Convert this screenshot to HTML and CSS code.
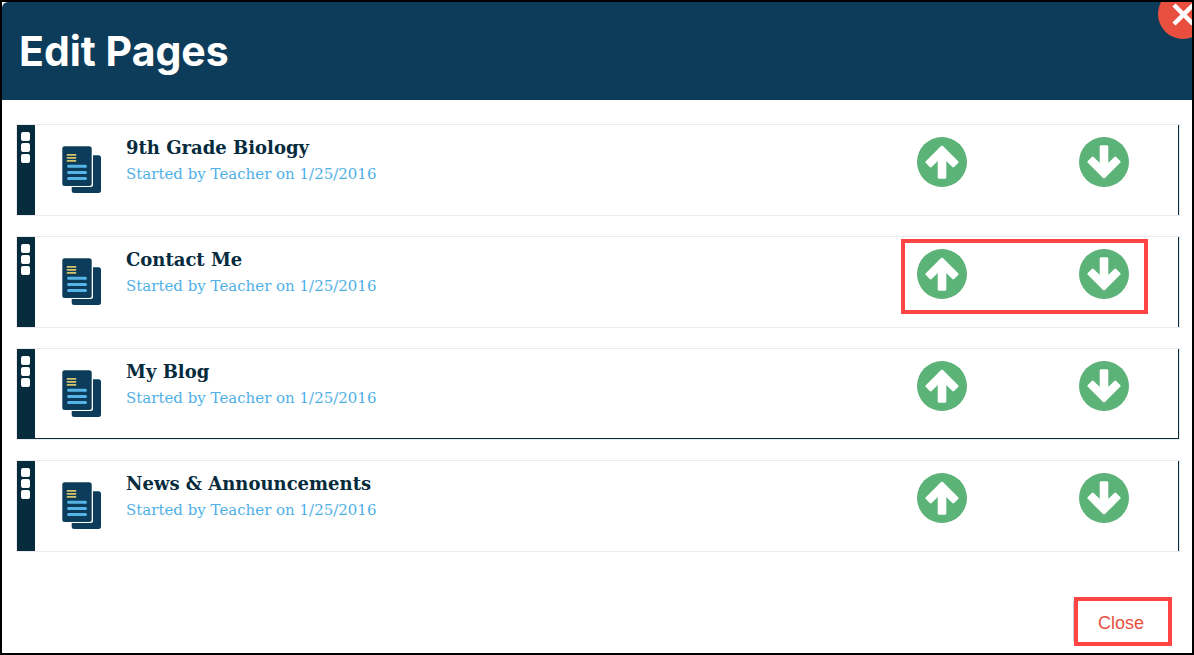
FILE: index.html
```html
<!DOCTYPE html>
<html lang="en">
<head>
  <meta charset="UTF-8" />
  <meta name="viewport" content="width=device-width, initial-scale=1.0" />
  <title>Edit Pages</title>
  <link rel="stylesheet" href="styles.css">
</head>
<body>
  <!-- Shared icons -->
  <svg class="sprite" aria-hidden="true">
    <symbol id="icon-pages" viewBox="0 0 40 48">
      <rect x="9.7" y="9.3" width="29.3" height="37.7" rx="2.5" fill="#0c3c5a"/>
      <path d="M0 0H31V38.5a2.5 2.5 0 0 1-2.5 2.5H0z" fill="#fff"/>
      <rect x="0.3" y="0.3" width="29.4" height="39.7" rx="2.5" fill="#0c3c5a"/>
      <path d="M5.5 8.8h8M5.5 11.8h8M5.5 14.8h8" stroke="#d6c46c" stroke-width="1.8" stroke-linecap="round"/>
      <path d="M6.5 20.3h17M6.5 26.4h17M6.5 32.5h17" stroke="#55b4e5" stroke-width="3" stroke-linecap="round"/>
    </symbol>
    <symbol id="icon-up" viewBox="0 0 50 50">
      <circle cx="25" cy="25" r="25" fill="#5bb377"/>
      <path d="M25 9.8L40.3 25.1L36.3 29.1L28 21V40.4H22V21L13.7 29.1L9.7 25.1Z" fill="#fff" stroke="#fff" stroke-width="2.6" stroke-linejoin="round"/>
    </symbol>
  </svg>

  <div class="modal">
    <header class="modal-header">
      <h1>Edit Pages</h1>
      <button class="dismiss" type="button" aria-label="Dismiss">
        <svg viewBox="0 0 50 50"><path d="M16 16L35 35M35 16L16 35" stroke="#fff" stroke-width="4.5"/></svg>
      </button>
    </header>

    <ul class="pages">
      <li class="page">
        <div class="page-inner">
          <div class="handle"><span></span><span></span><span></span></div>
          <svg class="page-icon"><use href="#icon-pages"/></svg>
          <div class="page-text">
            <h2>9th Grade Biology</h2>
            <p>Started by Teacher on 1/25/2016</p>
          </div>
          <div class="moves">
            <button type="button" aria-label="Move up"><svg><use href="#icon-up"/></svg></button>
            <button type="button" class="down" aria-label="Move down"><svg><use href="#icon-up"/></svg></button>
          </div>
        </div>
      </li>
      <li class="page">
        <div class="page-inner">
          <div class="handle"><span></span><span></span><span></span></div>
          <svg class="page-icon"><use href="#icon-pages"/></svg>
          <div class="page-text">
            <h2>Contact Me</h2>
            <p>Started by Teacher on 1/25/2016</p>
          </div>
          <div class="moves marked">
            <button type="button" aria-label="Move up"><svg><use href="#icon-up"/></svg></button>
            <button type="button" class="down" aria-label="Move down"><svg><use href="#icon-up"/></svg></button>
          </div>
        </div>
      </li>
      <li class="page">
        <div class="page-inner underlined">
          <div class="handle"><span></span><span></span><span></span></div>
          <svg class="page-icon"><use href="#icon-pages"/></svg>
          <div class="page-text">
            <h2>My Blog</h2>
            <p>Started by Teacher on 1/25/2016</p>
          </div>
          <div class="moves">
            <button type="button" aria-label="Move up"><svg><use href="#icon-up"/></svg></button>
            <button type="button" class="down" aria-label="Move down"><svg><use href="#icon-up"/></svg></button>
          </div>
        </div>
      </li>
      <li class="page">
        <div class="page-inner">
          <div class="handle"><span></span><span></span><span></span></div>
          <svg class="page-icon"><use href="#icon-pages"/></svg>
          <div class="page-text">
            <h2>News &amp; Announcements</h2>
            <p>Started by Teacher on 1/25/2016</p>
          </div>
          <div class="moves">
            <button type="button" aria-label="Move up"><svg><use href="#icon-up"/></svg></button>
            <button type="button" class="down" aria-label="Move down"><svg><use href="#icon-up"/></svg></button>
          </div>
        </div>
      </li>
    </ul>

    <footer class="modal-footer">
      <div class="close-wrap marked">
        <button class="close-btn" type="button">Close</button>
      </div>
    </footer>
  </div>
</body>
</html>
```

FILE: styles.css
```css
* {
  box-sizing: border-box;
}

body {
  margin: 0;
  background-color: #fff;
  font-family: Georgia, 'DejaVu Serif', serif;
}

h1, h2, p, ul {
  margin: 0;
  padding: 0;
}

button {
  padding: 0;
  border: none;
  background: none;
  cursor: pointer;
}

.sprite {
  position: absolute;
  width: 0;
  height: 0;
}

.modal {
  position: relative;
  display: flex;
  flex-direction: column;
  min-height: 100vh;
  border: 2px solid #000;
  overflow: hidden;
}

.modal-header {
  padding: 19px 17px;
  background-color: #0c3c5a;
  border-top-left-radius: 6px;
}

.modal-header h1 {
  font-family: 'Proxima Nova', Inter, sans-serif;
  font-size: 41px;
  font-weight: 700;
  line-height: 60px;
  color: #fff;
}

.dismiss {
  position: absolute;
  top: -13px;
  right: -16px;
  width: 50px;
  height: 50px;
  border-radius: 50%;
  background-color: #e94f3f;
}

.dismiss svg {
  display: block;
}

/* Page list */
.pages {
  display: flex;
  flex-direction: column;
  gap: 20px;
  padding: 24px 12px 0 14px;
  list-style: none;
}

.page {
  border: 1px solid #ebebee;
}

.page-inner {
  display: flex;
  align-items: flex-start;
  height: 90px;
  border-right: 1px solid #062b3d;
}

.underlined {
  border-bottom: 1px solid #062b3d;
}

.handle {
  display: flex;
  flex-direction: column;
  align-items: flex-start;
  align-self: stretch;
  gap: 2px;
  width: 18px;
  padding: 7px 0 0 4px;
  background-color: #062b3d;
}

.handle span {
  width: 9px;
  height: 9px;
  border-radius: 2px;
  background-color: #fff;
}

.page-icon {
  width: 40px;
  height: 48px;
  margin: 21px 24px 0 27px;
}

.page-text {
  flex: 1;
  padding-top: 10px;
}

.page-text h2 {
  font-size: 18px;
  line-height: 26px;
  color: #062b3d;
}

.page-text p {
  font-size: 15px;
  line-height: 26px;
  color: #4fb0e6;
}

.moves {
  display: flex;
  gap: 112px;
  margin: 12px 49px 0 0;
}

.moves button,
.moves svg {
  display: block;
  width: 50px;
  height: 50px;
}

.down svg {
  transform: rotate(180deg);
}

/* Red callout boxes */
.marked {
  position: relative;
}

.marked::after {
  content: '';
  position: absolute;
  border: 4px solid #ff4444;
  pointer-events: none;
}

.moves.marked::after {
  inset: -10px -19px -15px -16px;
}

.close-wrap.marked::after {
  inset: 0 0 0 1px;
}

.modal-footer {
  display: flex;
  justify-content: flex-end;
  margin-top: auto;
  padding: 20px 20px 7px;
}

.close-btn {
  display: block;
  width: 99px;
  height: 49px;
  padding: 3px 3px 0 0;
  border: 2px solid #ccc;
  border-radius: 6px;
  background-color: #fff;
  font-family: Arial, 'Liberation Sans', sans-serif;
  font-size: 18px;
  color: #e94f3f;
}
```
